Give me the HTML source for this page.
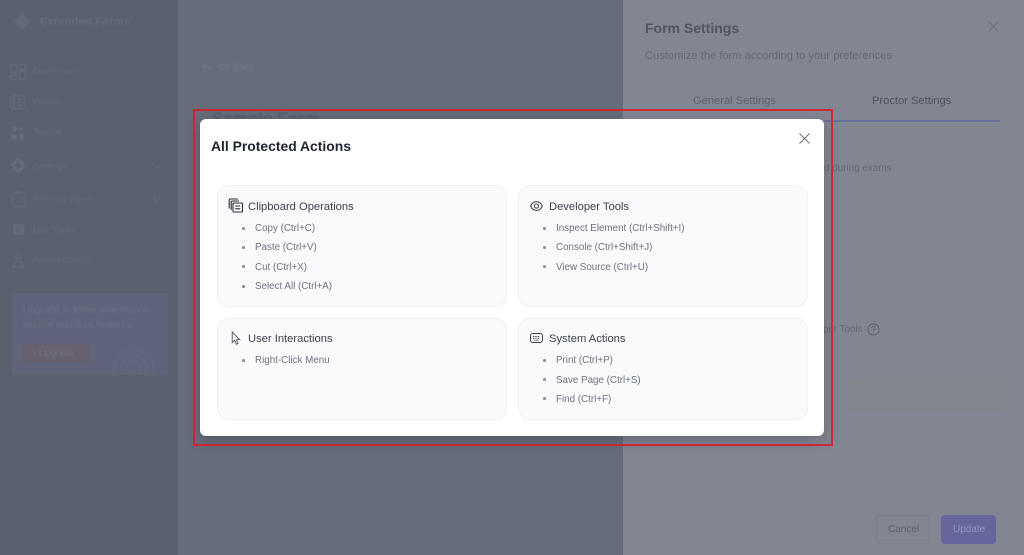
<!DOCTYPE html>
<html lang="en"><head><meta charset="utf-8"><title>All Protected Actions</title>
<style>
*{box-sizing:border-box}
html,body{margin:0;padding:0}
body{width:1024px;height:555px;overflow:hidden;position:relative;background:#666c79;font-family:"Liberation Sans",sans-serif}
.a{position:absolute;white-space:nowrap;line-height:1}
.sb{position:absolute;left:0;top:0;width:178px;height:555px;background:#5a606d}
.rp{position:absolute;left:623px;top:0;width:401px;height:555px;background:#828592}
.n{color:#656b78;font-size:9.5px;filter:blur(.6px)}
.ic{position:absolute;filter:blur(.5px);opacity:.8}
.modal{position:absolute;left:200px;top:119px;width:624px;height:317px;background:#fff;border-radius:6px;box-shadow:0 4px 14px rgba(40,40,50,.3)}
.red{position:absolute;left:193px;top:109px;width:640px;height:337px;border:2px solid #d2232e;opacity:.95}
.card{position:absolute;background:#f9fafc;border:1px solid #f0f1f4;border-radius:12px;width:289.5px}
.h{position:absolute;left:248px;font-size:11.2px;color:#3a3f4a;line-height:14px;white-space:nowrap}
.l{position:absolute;font-size:9.8px;color:#6d727d;line-height:12px;white-space:nowrap}
.b{position:absolute;width:2.5px;height:2.5px;border-radius:50%;background:#8b909a}
</style></head><body>
<div class="sb"></div>
<div class="rp"></div>

<!-- Sidebar -->
<svg class="ic" style="left:12px;top:11px" width="20" height="20" viewBox="0 0 22 22"><path d="M11 1l9.500 10L11 21 1.500 11z" fill="#656b78"/></svg>
<div class="a n" style="left:40px;top:17px;font-size:11px;letter-spacing:.3px;color:#666c79;font-weight:bold">Extended Forms</div>
<svg class="ic" style="left:10px;top:64px" width="16" height="16" viewBox="0 0 16 16" fill="none" stroke="#696f7c"><rect x=".5" y=".5" width="6" height="8"/><rect x=".5" y="11" width="6" height="4.500"/><rect x="9.500" y=".5" width="6" height="4.500"/><rect x="9.500" y="7" width="6" height="8"/></svg>
<div class="a n" style="left:33px;top:67px">Dashboard</div>
<svg class="ic" style="left:10px;top:94px" width="16" height="16" viewBox="0 0 16 16" fill="none" stroke="#696f7c"><rect x=".5" y="1" width="14" height="14" rx="2"/><path d="M4 1v14M7 5h5M7 8h5M7 11h5"/></svg>
<div class="a n" style="left:33px;top:98px">Forms</div>
<svg class="ic" style="left:11px;top:126px" width="14" height="15" viewBox="0 0 14 15" fill="#696f7c"><circle cx="4" cy="3" r="2.500"/><circle cx="10" cy="3" r="2"/><path d="M0 8h6v4l-2 2-4-2zM8 7h5v5l-3 2-2-2z"/></svg>
<div class="a n" style="left:33px;top:128px">Teams</div>
<svg class="ic" style="left:11px;top:158px" width="14" height="15" viewBox="0 0 14 15"><circle cx="7" cy="7.500" r="4.500" fill="none" stroke="#696f7c" stroke-width="3"/><circle cx="7" cy="7.500" r="6.200" fill="none" stroke="#696f7c" stroke-width="1.500" stroke-dasharray="2 2.800"/></svg>
<div class="a n" style="left:33px;top:162px">Settings</div>
<svg class="ic" style="left:152px;top:163px" width="10" height="6" viewBox="0 0 10 6" fill="none" stroke="#696f7c"><path d="M1 1l4 4 4-4"/></svg>
<svg class="ic" style="left:12px;top:191px" width="13" height="16" viewBox="0 0 13 16" fill="none" stroke="#696f7c"><rect x=".5" y="2" width="12" height="13.500" rx="2"/><path d="M4 2V.8h5V2"/></svg>
<div class="a n" style="left:33px;top:195px">Billing &amp; Plans</div>
<svg class="ic" style="left:152px;top:196px" width="10" height="6" viewBox="0 0 10 6" fill="none" stroke="#696f7c"><path d="M1 1l4 4 4-4"/></svg>
<svg class="ic" style="left:13px;top:224px" width="11" height="11" viewBox="0 0 11 11"><rect width="11" height="11" fill="#696f7c"/><path d="M4 2v7M7 2v7" stroke="#5a606d"/></svg>
<div class="a n" style="left:33px;top:226px">Doc Tools</div>
<svg class="ic" style="left:12px;top:253px" width="13" height="15" viewBox="0 0 13 15" fill="none" stroke="#696f7c"><circle cx="6.500" cy="3.500" r="2.800"/><path d="M1 14c0-3.500 2-5 5.500-5s5.500 1.500 5.500 5z"/></svg>
<div class="a n" style="left:33px;top:256px">Admin Control</div>
<div style="position:absolute;left:12px;top:293px;width:156px;height:82px;background:#5f647a;overflow:hidden">
<svg style="position:absolute;left:98px;top:44px;filter:blur(.6px)" width="50" height="40" viewBox="0 0 50 40" fill="none" stroke="#656a80" stroke-width="1.100"><circle cx="24" cy="32" r="20"/><circle cx="24" cy="32" r="13"/><circle cx="24" cy="32" r="7"/></svg>
</div>
<div class="a n" style="left:23px;top:306px;color:#6b7085;font-size:9.7px">Upgrade to Enterprise Plan to</div>
<div class="a n" style="left:23px;top:321px;color:#6b7085;font-size:9.7px">access premium features</div>
<div style="position:absolute;left:23px;top:344px;width:66px;height:18px;background:#67606f;border-radius:2px;filter:blur(.5px)"></div>
<div class="a n" style="left:32px;top:349px;color:#75757f;font-size:9px">↑ Upgrade</div>

<!-- Main -->
<svg class="ic" style="left:201px;top:62px" width="12" height="11" viewBox="0 0 12 11" fill="none" stroke="#767c89"><path d="M11.500 5.500H1M5 1.500l-4 4 4 4"/></svg>
<div class="a" style="left:218px;top:63px;color:#747a87;font-size:9.500px;filter:blur(.4px)">Go Back</div>
<div class="a" style="left:212px;top:110px;font-size:17px;font-weight:bold;color:#585e6a;filter:blur(.4px)">Sample Form</div>
<div class="a n" style="left:330px;top:115px;color:#626875;font-size:9px">Draft</div>

<!-- Right panel -->
<div class="a" style="left:645px;top:21px;font-size:14px;font-weight:bold;color:#535662">Form Settings</div>
<svg style="position:absolute;left:988px;top:21px" width="11" height="11" viewBox="0 0 11 11" fill="none" stroke="#6d707d" stroke-width="1.100"><path d="M.5.5l10 10M10.500.5l-10 10"/></svg>
<div class="a" style="left:645px;top:51px;font-size:11.150px;color:#656875">Customize the form according to your preferences</div>
<div class="a" style="left:693px;top:96px;font-size:11.150px;color:#5f626f">General Settings</div>
<div class="a" style="left:872px;top:96px;font-size:11.150px;color:#4f525f">Proctor Settings</div>
<div style="position:absolute;left:824px;top:120px;width:176px;height:2px;background:#6a6c9a"></div>
<div class="a" style="left:824px;top:164px;font-size:9.900px;color:#656875">d during exams</div>
<div class="a" style="left:823px;top:325px;font-size:9.800px;color:#656875">per Tools</div>
<svg style="position:absolute;left:867px;top:323px" width="13" height="13" viewBox="0 0 13 13" fill="none" stroke="#5e616d" stroke-width=".9"><circle cx="6.500" cy="6.500" r="5.500"/><path d="M4.800 5.200c0-1 .8-1.600 1.700-1.600s1.700.6 1.700 1.500c0 1.300-1.700 1.300-1.700 2.600"/><path d="M6.500 9.200v.6"/></svg>
<div style="position:absolute;left:850px;top:378px;width:154px;height:33px;background:#83858c;filter:blur(1px)"></div>
<div style="position:absolute;left:876px;top:515px;width:53px;height:29px;border:1px solid #7b7e8b;border-radius:3px"></div>
<div class="a" style="left:888px;top:525px;font-size:10px;color:#5e616e">Cancel</div>
<div style="position:absolute;left:941px;top:515px;width:55px;height:29px;background:#64669c;border-radius:4px"></div>
<div class="a" style="left:953px;top:525px;font-size:10px;color:#9597bc">Update</div>

<!-- Modal -->
<div class="modal"></div>
<div class="red"></div>
<div class="a" style="left:211px;top:140px;font-size:13.9px;font-weight:bold;color:#1f2431">All Protected Actions</div>
<svg style="position:absolute;left:799px;top:133px" width="11" height="11" viewBox="0 0 11 11" fill="none" stroke="#676b74" stroke-width=".9"><path d="M.5.5l10 10M10.500.5l-10 10"/></svg>

<div class="card" style="left:217px;top:185px;height:122px"></div>
<div class="card" style="left:518px;top:185px;height:122px"></div>
<div class="card" style="left:217px;top:318px;height:101.5px"></div>
<div class="card" style="left:518px;top:318px;height:101.5px"></div>

<!-- Clipboard -->
<svg style="position:absolute;left:228px;top:198px" width="16" height="16" viewBox="0 0 16 16" fill="none" stroke="#262a32" stroke-width="1.100"><path d="M1.200 10.500V2c0-.6.400-1 1-1H10"/><path d="M3.200 12V4c0-.6.400-1 1-1H11"/><rect x="5" y="5" width="9.500" height="9" rx="1"/><path d="M7.200 8h5M7.200 10.800h5"/></svg>
<div class="h" style="top:199.500px">Clipboard Operations</div>
<div class="b" style="left:242px;top:227px"></div><div class="l" style="left:255px;top:223px">Copy (Ctrl+C)</div>
<div class="b" style="left:242px;top:246px"></div><div class="l" style="left:255px;top:242px">Paste (Ctrl+V)</div>
<div class="b" style="left:242px;top:265px"></div><div class="l" style="left:255px;top:262px">Cut (Ctrl+X)</div>
<div class="b" style="left:242px;top:285px"></div><div class="l" style="left:255px;top:281px">Select All (Ctrl+A)</div>

<!-- Developer -->
<svg style="position:absolute;left:530px;top:201px" width="13" height="10" viewBox="0 0 13 10" fill="none" stroke="#3a3e47" stroke-width="1"><path d="M.6 5C2 2 4 .6 6.500.6S11 2 12.400 5C11 8 9 9.400 6.500 9.400S2 8 .6 5z"/><circle cx="6.500" cy="5" r="2.100"/></svg>
<div class="h" style="left:549px;top:199.500px">Developer Tools</div>
<div class="b" style="left:543px;top:227px"></div><div class="l" style="left:556px;top:223px">Inspect Element (Ctrl+Shift+I)</div>
<div class="b" style="left:543px;top:246px"></div><div class="l" style="left:556px;top:242px">Console (Ctrl+Shift+J)</div>
<div class="b" style="left:543px;top:265px"></div><div class="l" style="left:556px;top:262px">View Source (Ctrl+U)</div>

<!-- User -->
<svg style="position:absolute;left:231px;top:331px" width="10" height="15" viewBox="0 0 10 15" fill="#fff" stroke="#4a4e57" stroke-width=".9"><path d="M1.200 1v10.500l2.500-2.200 1.700 4 1.700-.8-1.700-3.800h3.200z"/></svg>
<div class="h" style="top:332px">User Interactions</div>
<div class="b" style="left:242px;top:359px"></div><div class="l" style="left:255px;top:355px">Right-Click Menu</div>

<!-- System -->
<svg style="position:absolute;left:530px;top:333px" width="13" height="10" viewBox="0 0 13 10" fill="none" stroke="#3a3e47" stroke-width="1"><rect x=".5" y=".5" width="12" height="9" rx="2.500"/><path d="M3 3.500h7M3 5.200h7M4 7.200h5" stroke-dasharray="1 .7"/></svg>
<div class="h" style="left:549px;top:332px">System Actions</div>
<div class="b" style="left:543px;top:359px"></div><div class="l" style="left:556px;top:355px">Print (Ctrl+P)</div>
<div class="b" style="left:543px;top:378px"></div><div class="l" style="left:556px;top:375px">Save Page (Ctrl+S)</div>
<div class="b" style="left:543px;top:397px"></div><div class="l" style="left:556px;top:394px">Find (Ctrl+F)</div>
</body></html>
